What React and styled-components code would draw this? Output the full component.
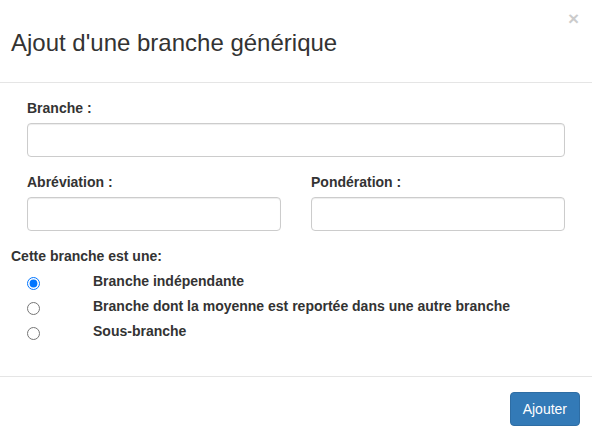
import React from "react";
import styled, { createGlobalStyle } from "styled-components";

const Global = createGlobalStyle`
  html, body { margin: 0; padding: 0; background: #fff; }
  body { font-family: "Liberation Sans", Arial, sans-serif; color: #333; }
  * { box-sizing: border-box; }
`;

const Modal = styled.div`
  width: 592px;
  height: 435px;
  background: #fff;
  position: relative;
  overflow: hidden;
`;

const Header = styled.div`
  height: 83px;
  border-bottom: 1px solid #e5e5e5;
  padding: 0 11px;
  display: flex;
  align-items: center;
`;

const Title = styled.h3`
  margin: 0;
  font-size: 24px;
  font-weight: 400;
  color: #333;
  line-height: 1.1;
  padding-top: 4px;
`;

const Close = styled.button`
  position: absolute;
  top: 9px;
  right: 13px;
  border: 0;
  background: transparent;
  padding: 0;
  font-family: "Liberation Sans", Arial, sans-serif;
  font-size: 19px;
  font-weight: 700;
  line-height: 20px;
  color: #000;
  opacity: 0.2;
`;

const Body = styled.div`
  padding: 16px 11px 0;
  height: 294px;
  border-bottom: 1px solid #e5e5e5;
`;

const Fields = styled.div`
  padding: 0 16px;
  display: grid;
  grid-template-columns: 1fr 1fr;
  column-gap: 30px;
  row-gap: 16px;
`;

const Group = styled.div`
  grid-column: ${(p) => (p.$full ? "1 / -1" : "auto")};
  display: flex;
  flex-direction: column;
`;

const Label = styled.label`
  font-size: 14px;
  font-weight: 700;
  line-height: 18px;
  color: #333;
  margin-bottom: 6px;
`;

const Input = styled.input`
  height: 34px;
  width: 100%;
  border: 1px solid #ccc;
  border-radius: 4px;
  box-shadow: inset 0 1px 1px rgba(0, 0, 0, 0.075);
  padding: 6px 12px;
  font-size: 14px;
`;

const RadioTitle = styled.div`
  margin-top: 16px;
  font-size: 14px;
  font-weight: 700;
  line-height: 18px;
  color: #333;
`;

const RadioList = styled.div`
  margin-top: 8px;
  display: flex;
  flex-direction: column;
  gap: 9px;
`;

const RadioRow = styled.label`
  display: flex;
  align-items: center;
  height: 16px;
  font-size: 14px;
  font-weight: 700;
  color: #333;
`;

const Radio = styled.input`
  margin: 0 0 0 16px;
  width: 13px;
  height: 13px;
  flex: none;
  position: relative;
  top: 2px;
`;

const RadioText = styled.span`
  margin-left: 53px;
`;

const Footer = styled.div`
  display: flex;
  justify-content: flex-end;
  padding: 15px 12px 0;
`;

const Button = styled.button`
  height: 34px;
  padding: 0 12px;
  background: #337ab7;
  border: 1px solid #2e6da4;
  border-radius: 4px;
  color: #fff;
  font-family: "Liberation Sans", Arial, sans-serif;
  font-size: 14px;
`;

export default function App() {
  return (
    <>
      <Global />
      <Modal>
        <Header>
          <Title>Ajout d'une branche générique</Title>
        </Header>
        <Close aria-label="Fermer">×</Close>
        <Body>
          <Fields>
            <Group $full>
              <Label>Branche :</Label>
              <Input />
            </Group>
            <Group>
              <Label>Abréviation :</Label>
              <Input />
            </Group>
            <Group>
              <Label>Pondération :</Label>
              <Input />
            </Group>
          </Fields>
          <RadioTitle>Cette branche est une:</RadioTitle>
          <RadioList>
            <RadioRow>
              <Radio type="radio" name="type" defaultChecked />
              <RadioText>Branche indépendante</RadioText>
            </RadioRow>
            <RadioRow>
              <Radio type="radio" name="type" />
              <RadioText>Branche dont la moyenne est reportée dans une autre branche</RadioText>
            </RadioRow>
            <RadioRow>
              <Radio type="radio" name="type" />
              <RadioText>Sous-branche</RadioText>
            </RadioRow>
          </RadioList>
        </Body>
        <Footer>
          <Button>Ajouter</Button>
        </Footer>
      </Modal>
    </>
  );
}
